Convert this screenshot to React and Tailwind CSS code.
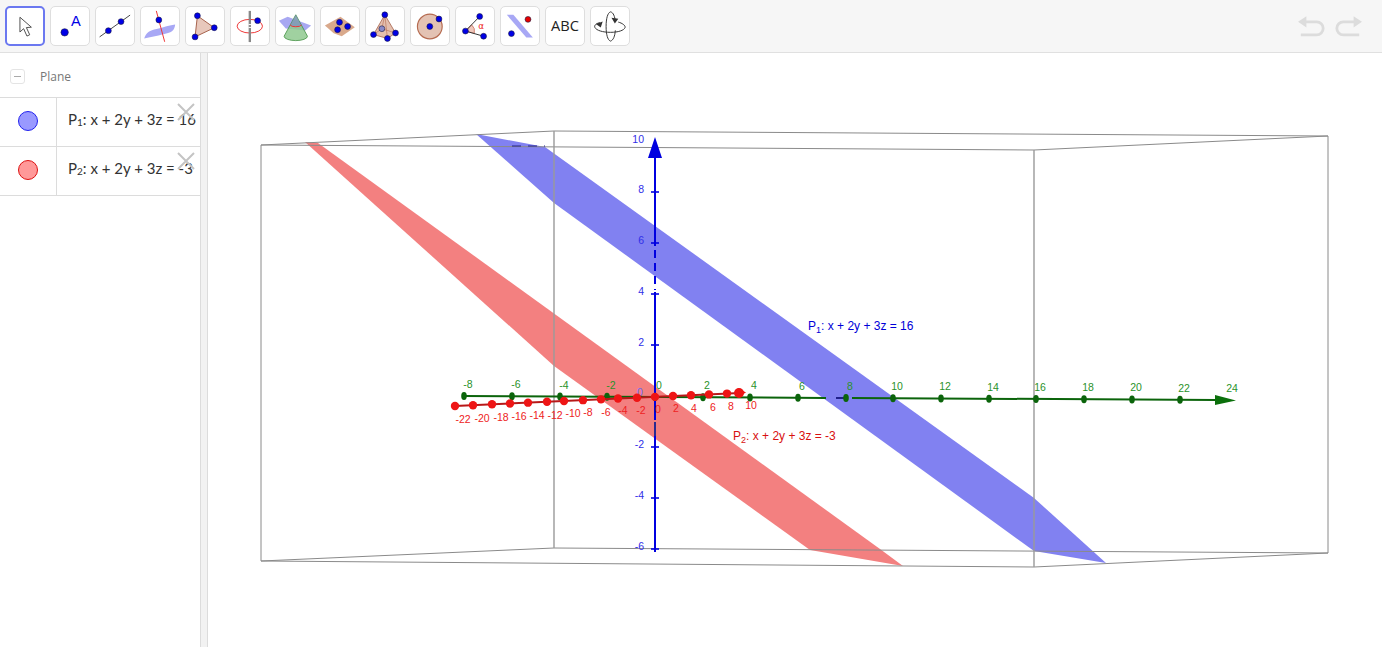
import React from 'react';

const Dot = ({ x, y, r = 3, fill = '#0000e6' }) => <circle cx={x} cy={y} r={r} fill={fill} stroke="#1a1a40" strokeWidth="0.6" />;

// toolbar icons, all drawn in a 39x39 box
const icons = [
  <path d="M14 10v16l4-3.600 3.600 8 3-1.400-3.600-7.800 5.400-.4z" fill="#fff" stroke="#444" strokeWidth="1" strokeLinejoin="round" />,
  <>
    <Dot x={14} y={26} r={3.8} />
    <text x={25.500} y={20} textAnchor="middle" fontSize="15" fill="#0000e6" fontFamily="Liberation Sans, sans-serif">A</text>
  </>,
  <>
    <path d="M3.700 30.700 35 8.300" stroke="#444" strokeWidth="1" />
    <Dot x={12.7} y={24.3} />
    <Dot x={25.7} y={15} />
  </>,
  <>
    <path d="M3.300 32.300C5 26 9 24 16 22.500S30 18.500 35 18C35 21 33 25 30 26 25 27.500 12 31 3.300 32.300z" fill="#a8a8f5" />
    <path d="M15.700 4 24.300 35.700" stroke="#ee3333" strokeWidth="1" />
    <Dot x={18.3} y={13.3} />
  </>,
  <>
    <path d="M11.700 9 29 21.300 9.300 30.700z" fill="#e8c8bc" stroke="#a5604a" strokeWidth="1" />
    <Dot x={11.7} y={9} />
    <Dot x={29} y={21.3} />
    <Dot x={9.3} y={30.7} />
  </>,
  <>
    <ellipse cx={19.3} cy={19.7} rx={13} ry={7} fill="none" stroke="#ee3333" strokeWidth="1" />
    <path d="M19.300 4v32" stroke="#888" strokeWidth="2.400" />
    <path d="M18 18h3M18 21h3" stroke="#fff" strokeWidth="1" />
    <Dot x={27.3} y={14} />
  </>,
  <>
    <path d="M3 14 12 10 36 19 30 24 10 22z" fill="#a8a8f2" />
    <path d="M20.300 8 8.300 30a12 4.500 0 0 0 24 0z" fill="#8fc98f" fillOpacity="0.85" stroke="#3f8f3f" strokeWidth="0.8" />
    <path d="M14.500 18.500a6 2.400 0 0 0 11.600 0l-5.800-10.500z" fill="#7a86c8" fillOpacity="0.6" />
    <path d="M14.500 18.500a6 2.400 0 0 0 11.600 0" fill="none" stroke="#ee3333" strokeWidth="1" />
  </>,
  <>
    <path d="M4 19 20 10 34.700 20.700 21.300 30 13 27z" fill="#d9a98c" />
    <Dot x={19} y={15.7} />
    <Dot x={27.3} y={20} />
    <Dot x={17} y={23.3} />
  </>,
  <>
    <path d="M19.300 8 7.700 28.300 22 32.300 30.300 26.700z" fill="#e4bfae" stroke="#a5604a" strokeWidth="0.8" />
    <path d="M19.300 8 16.300 22.300 7.700 28.300M16.300 22.300 30.300 26.700M19.300 8 22 32.300" fill="none" stroke="#b9755c" strokeWidth="0.7" />
    <Dot x={16.3} y={22.3} fill="#8a8ac8" />
    <Dot x={19.3} y={8} />
    <Dot x={7.7} y={28.3} />
    <Dot x={22} y={32.3} />
    <Dot x={30.3} y={26.7} />
  </>,
  <>
    <circle cx={19.3} cy={20} r={12.7} fill="#e3c2b3" stroke="#b56b50" strokeWidth="1.200" />
    <Dot x={19.3} y={20} />
    <Dot x={28.7} y={12.3} />
  </>,
  <>
    <path d="M9.700 24.700 16 18.200a9 9 0 0 1 2.800 8.800z" fill="#efc8bd" stroke="#c9705c" strokeWidth="0.8" />
    <path d="M9.700 24.700 24.300 9.700M9.700 24.700 28.300 30" stroke="#333" strokeWidth="1" />
    <text x={25.7} y={23} textAnchor="middle" fontSize="9" fill="#ee2222" fontFamily="DejaVu Sans, sans-serif">α</text>
    <Dot x={9.7} y={24.7} />
    <Dot x={24.3} y={9.7} />
    <Dot x={28.3} y={30} />
  </>,
  <>
    <path d="M6 8h6.700l20 23.300H26z" fill="#a8a8f5" />
    <Dot x={27.7} y={12.7} fill="#e60000" />
    <Dot x={10.7} y={27.3} />
  </>,
  <text x={19.5} y={25} textAnchor="middle" fontSize="15" fill="#222" fontFamily="Open Sans, sans-serif">ABC</text>,
  <>
    <path d="M20 35c-3-1-4.500-7-4.500-15S17 6 20 5c3 .5 4.500 5 5 10M25 24c-.5 6-2 10-5 11" fill="none" stroke="#333" strokeWidth="1" />
    <path d="M9 16c-4 1-6 3-5 5 1.500 3 8 5 16 5s14-2 15-5c.5-2-3-4.500-7-5.500" fill="none" stroke="#333" strokeWidth="1" />
    <path d="M21 11l3.500 6 3.500-5zM5 17.500l7-2.500-2 6z" fill="#333" />
  </>,
];

const zLabels = [[10, 139], [8, 189], [6, 240], [4, 291], [2, 342], [-2, 444], [-4, 495], [-6, 546]];
const zTicks = [192, 243, 294, 345, 447, 498, 549];
const yPts = [464, 512, 560, 607, 655, 703, 750, 798, 846, 893, 941, 989, 1036, 1084, 1132, 1180];
const yLabels = [-8, -6, -4, -2, 0, 2, 4, 6, 8, 10, 12, 14, 16, 18, 20, 22];
const xPts = [455, 473, 492, 510, 528, 547, 564, 583, 601, 618, 637, 655, 673, 691, 709, 727];
const xLabels = [
  [-22, 463, 419], [-20, 482, 418], [-18, 501, 417], [-16, 519, 416], [-14, 537, 415], [-12, 555, 415], [-10, 573, 413],
  [-8, 588, 412], [-6, 606, 412], [-4, 623, 410], [-2, 641, 410], [0, 658, 409], [2, 676, 408], [4, 694, 408], [6, 713, 407], [8, 731, 406], [10, 751, 405],
];

const greenY = (x) => 396 + ((x - 463) / 772) * 4;
const redY = (x) => 406 - ((x - 455) / 285) * 13;

function Scene() {
  return (
    <svg viewBox="208 53 1174 594" className="w-full h-full" fontFamily="Liberation Sans, sans-serif">
      <polygon points="305,142 318,143 880,549 903,566 810,550 554,366" fill="#f38080" />
      <polygon points="476,134 545,147 1034,498 1106,563 1034,551 554,203" fill="#8181f1" />

      {/* bounding box */}
      <g stroke="#8a8a8a" strokeWidth="1" fill="none">
        <path d="M261 145 554 131 1328 136 1034 150z" />
        <path d="M261 561 554 548 1328 553 1034 567z" />
        <path d="M261 145V561M1328 136V553" />
      </g>
      <path d="M554 131V548M1034 150V567" stroke="#9a9a9a" strokeWidth="1.400" />

      {/* z axis */}
      <path d="M655 552V436M655 420V292M655 246V150" stroke="#0000e0" strokeWidth="2" />
      <path d="M655 250V290" stroke="#0000e0" strokeWidth="2" strokeDasharray="8 5" />
      <path d="M655 422V436" stroke="#2a2a90" strokeWidth="2" />
      <polygon points="655,137 662,158 648,158" fill="#0000e0" />
      {zTicks.map((y) => <path key={y} d={`M651 ${y}H659`} stroke="#0000e0" strokeWidth="1.600" />)}
      {zLabels.map(([v, y]) => (
        <text key={v} x={644} y={y + 4} textAnchor="end" fontSize="10.500" fill="#3030e8">{v}</text>
      ))}
      <text x={640} y={396} textAnchor="middle" fontSize="10.500" fill="#6a6af0">0</text>
      <path d="M512 146H545" stroke="#20208a" strokeWidth="1" strokeDasharray="9 7" />

      {/* y axis */}
      <path d={`M463 396 L826 ${greenY(826)} M852 ${greenY(852)} L1216 ${greenY(1216)}`} stroke="#0b640b" strokeWidth="2" />
      <path d="M836 398H846" stroke="#20208a" strokeWidth="2" />
      <polygon points="1215,395 1236,400.500 1215,405" fill="#0b700b" />
      {yPts.map((x) => <ellipse key={x} cx={x} cy={greenY(x)} rx={2.8} ry={4} fill="#0b640b" />)}
      {yLabels.map((v, i) => (
        <text key={v} x={yPts[i] + 4} y={greenY(yPts[i]) - 8} textAnchor="middle" fontSize="10.500" fill="#2a922a">{v}</text>
      ))}
      <text x={1232} y={392} textAnchor="middle" fontSize="10.500" fill="#2a922a">24</text>

      {/* x axis */}
      <path d="M455 406 740 393" stroke="#b81818" strokeWidth="2" />
      {xPts.map((x) => <circle key={x} cx={x} cy={redY(x)} r={4.2} fill="#ee1515" />)}
      <circle cx={739} cy={393} r={5} fill="#ee1515" />
      <path d="M738 388 746 392.500 738 397z" fill="#ee1515" />
      {xLabels.map(([v, x, y]) => (
        <text key={v} x={x} y={y + 4} textAnchor="middle" fontSize="10.500" fill="#ee2222">{v}</text>
      ))}

      <text x={808} y={330} fontSize="12" fill="#0000d8">P<tspan fontSize="9" dy="3">1</tspan><tspan dy="-3">: x + 2y + 3z = 16</tspan></text>
      <text x={733} y={440} fontSize="12" fill="#d81010">P<tspan fontSize="9" dy="3">2</tspan><tspan dy="-3">: x + 2y + 3z = -3</tspan></text>
    </svg>
  );
}

const Row = ({ fill, stroke, n, value }) => (
  <div className="relative flex h-[49px] border-b border-[#dcdcdc]">
    <div className="flex w-[57px] shrink-0 items-center justify-center border-r border-[#dcdcdc] pb-[3px]">
      <span className="h-5 w-5 rounded-full border" style={{ background: fill, borderColor: stroke }} />
    </div>
    <div className="flex items-center pb-[5px] pl-[11px] font-['Lato',sans-serif] text-[15px] whitespace-nowrap text-[#333]">
      P<sub className="text-[10px]">{n}</sub>: x + 2y + 3z = {value}
    </div>
    <svg viewBox="0 0 20 20" className="absolute top-[4px] left-[176px] h-5 w-5">
      <path d="M2 2 18 18M18 2 2 18" stroke="#c4c4c4" strokeWidth="2" />
    </svg>
  </div>
);

export default function App() {
  return (
    <div className="flex h-screen flex-col overflow-hidden bg-white font-['Open_Sans',sans-serif]">
      <div className="flex h-[53px] shrink-0 items-center gap-[5px] border-b border-[#e0e0e0] bg-[#f6f6f6] pl-[5px]">
        {icons.map((icon, i) => (
          <div
            key={i}
            className={`h-[40px] w-[40px] rounded-[5px] bg-white ${i === 0 ? 'border-2 border-[#6b78f0]' : 'border border-[#dedede]'}`}
          >
            <svg viewBox="0 0 39 39" className="h-full w-full">{icon}</svg>
          </div>
        ))}
        <div className="mr-[20px] ml-auto flex gap-[8px]">
          <svg viewBox="0 0 30 24" className="h-[25px] w-[28px]">
            <path d="M5 7H20a6.500 6.500 0 0 1 0 14H3" fill="none" stroke="#dcdcdc" strokeWidth="3" />
            <path d="M0 7 9 1V13z" fill="#dcdcdc" />
          </svg>
          <svg viewBox="0 0 30 24" className="h-[25px] w-[28px]">
            <path d="M25 7H10a6.500 6.500 0 0 0 0 14H27" fill="none" stroke="#dcdcdc" strokeWidth="3" />
            <path d="M30 7 21 1V13z" fill="#dcdcdc" />
          </svg>
        </div>
      </div>
      <div className="flex min-h-0 flex-1">
        <div className="w-[200px] shrink-0 overflow-hidden">
          <div className="flex h-[45px] items-center border-b border-[#dcdcdc] pt-[3px] pl-[10px] text-[12px] text-[#777]">
            <span className="mr-[15px] flex h-[15px] w-[15px] items-center justify-center rounded-[3px] border border-[#e4e4e4]">
              <span className="h-[1px] w-[7px] bg-[#aaa]" />
            </span>
            Plane
          </div>
          <Row fill="#9999ff" stroke="#2222ee" n="1" value="16" />
          <Row fill="#ff9999" stroke="#dd1111" n="2" value="-3" />
        </div>
        <div className="w-[8px] shrink-0 border-x border-[#dcdcdc] bg-[#f2f2f2]" />
        <div className="min-w-0 flex-1">
          <Scene />
        </div>
      </div>
    </div>
  );
}
